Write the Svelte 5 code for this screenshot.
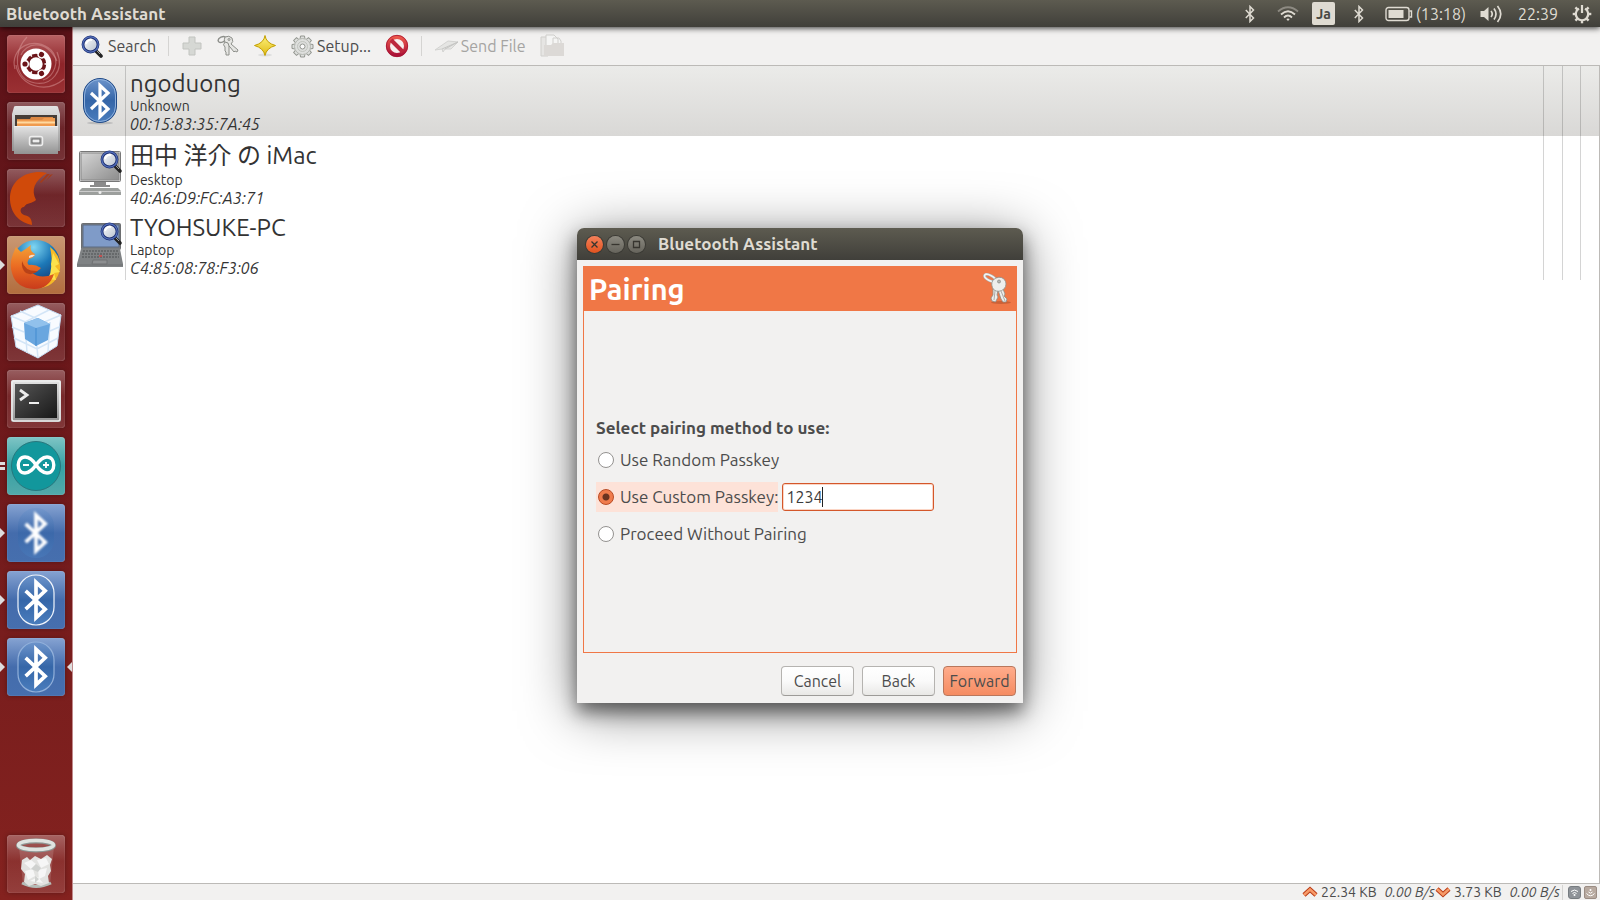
<script>
	let devices = [
		{ name: "ngoduong", type: "Unknown", address: "00:15:83:35:7A:45", icon: "bluetooth" },
		{ name: "田中 洋介 の iMac", type: "Desktop", address: "40:A6:D9:FC:A3:71", icon: "desktop" },
		{ name: "TYOHSUKE-PC", type: "Laptop", address: "C4:85:08:78:F3:06", icon: "laptop" }
	];
	let apps = [
		{ id: "dash", label: "Search your computer" },
		{ id: "files", label: "Files" },
		{ id: "swift", label: "Media" },
		{ id: "firefox", label: "Firefox", run: 1 },
		{ id: "cube", label: "Virtual machines" },
		{ id: "terminal", label: "Terminal" },
		{ id: "arduino", label: "Arduino", run: 2 },
		{ id: "bt1", label: "Bluetooth", run: 1 },
		{ id: "bt2", label: "Bluetooth Devices", run: 1 },
		{ id: "bt3", label: "Bluetooth Assistant", run: 1, active: true }
	];
	let selected = $state(0);
	let method = $state("custom");
	let passkey = $state("1234");
</script>

{#snippet rune()}
	<path d="M-9 -8 L8 8 L0 15.5 V-15.5 L8 -8 L-9 8" fill="none" stroke="#fff" stroke-width="3.2" />
{/snippet}

{#snippet lens()}
	<path d="M15 16 L20 21" stroke="#222" stroke-width="3.600" stroke-linecap="round" />
	<path d="M15 15 L19 19" stroke="#999" stroke-width="1" />
	<circle cx="9.500" cy="9.500" r="7.500" fill="url(#glass)" stroke="#1d2f72" stroke-width="2.800" />
	<circle cx="9.500" cy="9.500" r="7.700" fill="none" stroke="#5672bd" stroke-width="1.200" />
	<path d="M5 9 A5 5 0 0 1 11 5" fill="none" stroke="#fff" stroke-width="2" />
{/snippet}

{#snippet smallBluetooth()}
	<svg class="rune" width="10" height="18" viewBox="0 0 10 18" aria-hidden="true">
		<path d="M0.800 5 L8.500 13 L5 16.500 V1.500 L8.500 5 L0.800 13" fill="none" stroke="#dfdbd2" stroke-width="1.500" />
	</svg>
{/snippet}

<svg class="defs" width="0" height="0" aria-hidden="true">
	<defs>
		<linearGradient id="blue" x2="0" y2="1"><stop offset="0" stop-color="#6d94cb" /><stop offset=".5" stop-color="#3566a8" /><stop offset="1" stop-color="#4a7dbd" /></linearGradient>
		<linearGradient id="glass" x2="1" y2="1"><stop offset="0" stop-color="#fff" /><stop offset="1" stop-color="#b4bdcc" /></linearGradient>
		<linearGradient id="metal" x2="0" y2="1"><stop offset="0" stop-color="#e4e4e4" /><stop offset="1" stop-color="#929292" /></linearGradient>
		<linearGradient id="screen" x2="1" y2="1"><stop offset="0" stop-color="#d5d5d5" /><stop offset="1" stop-color="#8d8d8d" /></linearGradient>
		<linearGradient id="dark" x2="1" y2="1"><stop offset="0" stop-color="#555" /><stop offset="1" stop-color="#181818" /></linearGradient>
		<linearGradient id="star" x2="0" y2="1"><stop offset="0" stop-color="#fff37a" /><stop offset="1" stop-color="#dfba17" /></linearGradient>
		<linearGradient id="red" x2="0" y2="1"><stop offset="0" stop-color="#ed594c" /><stop offset="1" stop-color="#ab1238" /></linearGradient>
		<linearGradient id="fox" x2="0" y2="1"><stop offset="0" stop-color="#f4a137" /><stop offset=".5" stop-color="#ea6a22" /><stop offset="1" stop-color="#c93b1b" /></linearGradient>
		<radialGradient id="globe" cx=".45" cy=".15" r=".8"><stop offset="0" stop-color="#7fd6f2" /><stop offset=".5" stop-color="#1d79b8" /><stop offset="1" stop-color="#123a75" /></radialGradient>
	</defs>
</svg>

<div class="desktop">
	<header class="panel">
		<h1>Bluetooth Assistant</h1>
		<div class="tray">
			{@render smallBluetooth()}
			<svg class="wifi" width="22" height="16" viewBox="0 0 22 16" fill="none" stroke="#dfdbd2" stroke-width="1.800">
				<path d="M1 5.500 Q11 -3 21 5.500" stroke="#8d8a82" />
				<path d="M4 8.500 Q11 2 18 8.500" />
				<path d="M7 11.500 Q11 7.500 15 11.500" />
				<path d="M9.300 13 L11 15 L12.700 13 Q11 11.800 9.300 13Z" fill="#dfdbd2" stroke="none" />
			</svg>
			<span class="lang">Ja</span>
			{@render smallBluetooth()}
			<span class="battery">
				<svg width="28" height="16" viewBox="0 0 28 16" fill="none" stroke="#dfdbd2" stroke-width="1.400">
					<rect x="1" y="1.500" width="23" height="13" rx="2.500" />
					<path d="M24.500 5 H26.500 V11 H24.500" />
					<rect x="3.500" y="4" width="15" height="8" fill="#dfdbd2" stroke="none" />
				</svg>
				(13:18)
			</span>
			<svg class="sound" width="23" height="20" viewBox="0 0 23 20" fill="none" stroke="#dfdbd2" stroke-width="1.700">
				<path d="M0.500 7 H4 L8.500 3 V17 L4 13 H0.500Z" fill="#dfdbd2" stroke="none" />
				<path d="M11 7 Q13.500 10 11 13 M14 4.500 Q18 10 14 15.500 M17.500 2 Q24 10 17.500 18" />
			</svg>
			<time>22:39</time>
			<svg width="20" height="20" viewBox="-10 -10 20 20" fill="none" stroke="#dfdbd2">
				<path d="M-3 -5.400 A6.200 6.200 0 1 0 3 -5.400" stroke-width="2.200" />
				<path d="M0 -9 V-1" stroke-width="2.200" />
				{#each [45, 90, 135, 180, 225, 270, 315] as angle}
					<path d="M0 -6.500 V-9.300" stroke-width="2.400" transform="rotate({angle})" />
				{/each}
			</svg>
		</div>
	</header>

	<div class="body">
		<nav class="launcher">
			{#each apps as app}
				<button class="tile {app.id}" class:active={app.active} class:run={app.run === 1} aria-label={app.label}>
					<svg width="58" height="58" viewBox="0 0 58 58">
						{#if app.id === "dash"}
							<g fill="none" stroke="#d99a9a" stroke-opacity=".5" stroke-width="1.200">
								<path d="M8 34 C2 12 28 0 44 15 C54 25 47 42 36 45" />
								<path d="M20 2 C6 16 6 44 28 48 C44 51 58 36 50 17" />
								<path d="M9 30 C12 50 38 60 57 44 M14 20 C18 9 38 2 50 26" />
							</g>
							<circle cx="29" cy="29" r="15.500" fill="#fff" />
							<circle cx="29" cy="29" r="8.500" fill="none" stroke="#6b1419" stroke-width="3.600" />
							{#each [60, 180, 300] as angle}
								<g transform="rotate({angle} 29 29)">
									<circle cx="40" cy="29" r="4" fill="#fff" />
									<circle cx="40" cy="29" r="2.600" fill="#6b1419" />
									<path d="M20.500 29 H16" stroke="#fff" stroke-width="1.500" />
								</g>
							{/each}
						{:else if app.id === "files"}
							<path d="M7 5 Q7 4 9 4 H49 Q51 4 51 5 L53 12 V49 H5 V12Z" fill="url(#metal)" />
							<path d="M8 13 H50 V26 H8Z" fill="#463d37" />
							<path d="M10 17 H23 L24 15 H46 V26 H10Z" fill="#dc8742" />
							<path d="M10 18 H35 L37 16 H48 V26 H10Z" fill="#f09b4f" />
							<path d="M10 20.500 H48" stroke="#ffd9a0" stroke-width="2" />
							<path d="M7 24 H51 V52 H7Z" fill="url(#metal)" />
							<path d="M7 24.500 H51" stroke="#eee" />
							<rect x="22.500" y="34.500" width="13" height="9" rx="2" fill="#aaa" stroke="#eee" stroke-width="1.500" />
							<rect x="25" y="37" width="8" height="4" fill="#eee" stroke="#666" />
						{:else if app.id === "swift"}
							<path d="M40 4 C25 0 2 8 3 31 C4 47 15 54 25 56 C25 49 22 47 17 46 C12 44 13 38 17 38 C20 33 25 35 29 31 C24 21 27 12 40 4Z" fill="#d04a0a" />
							<path d="M34 14 L43 5 L40 5 L33 13Z M39 12 L46 5 L43 6Z" fill="#a43b18" />
						{:else if app.id === "firefox"}
							<circle cx="29" cy="28" r="24" fill="url(#globe)" />
							<path d="M43 11 Q54 19 53 33 Q50 49 34 52 Q47 42 45 31 Q45 20 43 11Z" fill="#f6ba27" />
							<path d="M46 17 L52 28 L48 30 L53 36 L47 37 L49 44 L41 43 Q45 35 44 28Z" fill="#fce24c" />
							<path d="M6 18 L9 11 L14 16 Q19 13 24 9 Q22 15 28 18 Q27 22 22 23 Q19 27 22 29 Q28 28 34 32 Q30 37 24 36 Q33 44 47 38 Q42 53 27 53 Q9 52 5 37 Q2 28 6 18Z" fill="url(#fox)" />
							<path d="M15 25 Q18 36 31 35 Q25 40 19 37 Q14 33 15 25Z" fill="#b84218" />
							<path d="M22 20 Q25 18 28 19 Q25 22 22 22Z" fill="#f4ded0" />
						{:else if app.id === "cube"}
							<path d="M31 2 L54 12 L50 43 L31 55 L9 44 L4 13Z" fill="#f8fbff" stroke="#c4dcf4" />
							<path d="M4 13 L28 23 L54 12 M28 23 L31 55 M13 8 L37 19 M42 7 L18 19 L20 50 M5 24 L17 29 M43 28 L52 24 M7 35 L30 46 L51 35 M43 19 L41 48" fill="none" stroke="#d3e5f7" stroke-width="1.500" />
							<path d="M17 20 L31 15 L43 21 L41 37 L29 43 L18 36Z" fill="#69a6df" />
							<path d="M17 20 L29 25 L43 21 L31 15Z" fill="#91c1ec" />
							<path d="M29 25 V43" stroke="#438bd0" />
						{:else if app.id === "terminal"}
							<rect x="4" y="10" width="50" height="42" rx="2" fill="url(#metal)" />
							<rect x="5" y="11" width="48" height="40" rx="2" fill="none" stroke="#eee" stroke-width="1.500" />
							<rect x="8" y="14" width="42" height="34" fill="url(#dark)" />
							<path d="M13 20 L20 25 L13 30" fill="none" stroke="#eee" stroke-width="2.800" />
							<path d="M22 33 H32" stroke="#eee" stroke-width="2" />
						{:else if app.id === "arduino"}
							<circle cx="29" cy="29" r="24.500" fill="#12979c" stroke="#28777d" />
							<path d="M29 28 C24 20 20 20 18 20 C9 20 9 36 18 36 C23 36 26 32 29 28 C32 24 35 20 40 20 C49 20 49 36 40 36 C35 36 32 32 29 28Z" fill="none" stroke="#fff" stroke-width="3.400" />
							<path d="M16 28 H22 M36 28 H42 M39 25 V31" stroke="#fff" stroke-width="1.800" />
						{:else}
							<rect x="11" y="4" width="36" height="50" rx="18" fill="url(#blue)" stroke={app.id === "bt2" ? "#f0f5fc" : "#91b0da"} stroke-width={app.id === "bt1" ? 0 : 1.2} opacity={app.id === "bt1" ? 0.55 : 1} />
							<g class="mark" transform="translate(29 29) scale(1.15)">
								{@render rune()}
							</g>
						{/if}
					</svg>
					{#if app.run === 2}<i class="pair"></i>{/if}
				</button>
			{/each}
			<button class="tile trash" aria-label="Trash">
				<svg width="58" height="58" viewBox="0 0 58 58">
					<path d="M12 12 L16 49 Q29 54 43 49 L47 12Z" fill="#fff" fill-opacity=".14" />
					<path d="M15 48 Q29 55 44 48" stroke="#b5bcb8" stroke-width="3" fill="none" />
					<path d="M15 25 L20 22 L23 25 L28 21 L34 24 L40 20 L45 24 L43 30 L44 36 L41 41 L42 48 L34 51 L28 49 L22 51 L17 47 L18 39 L14 34Z" fill="#e2e2e0" />
					<path d="M17 28 L24 25 L29 29 L24 34Z M30 25 L39 23 L42 29 L34 33Z M18 36 L26 34 L28 41 L21 45Z M31 35 L40 33 L38 41 L32 44Z M23 46 L31 42 L36 48Z" fill="#f6f6f6" />
					<path d="M24 34 L29 29 L34 33 L31 37Z M28 41 L32 44 L28 48Z" fill="#cfd1cf" />
					<ellipse cx="29" cy="10.500" rx="17.500" ry="4.500" fill="none" stroke="#8d9592" stroke-width="5" />
					<ellipse cx="29" cy="10" rx="17.500" ry="4.500" fill="none" stroke="#dfe3e0" stroke-width="3.600" />
				</svg>
			</button>
		</nav>

		<main class="window">
			<div class="toolbar">
				<button>
					<svg width="23" height="23" viewBox="0 0 23 23">{@render lens()}</svg>
					Search
				</button>
				<span class="sep"></span>
				<button disabled aria-label="Add">
					<svg width="22" height="22" viewBox="0 0 22 22"><path d="M8 2 H14 V8 H20 V14 H14 V20 H8 V14 H2 V8 H8Z" fill="#d6d8d4" stroke="#c2c4c0" /></svg>
				</button>
				<button aria-label="Pair">
					<svg width="22" height="22" viewBox="0 0 22 22" fill="#e5e5e2" stroke="#8d8f8a">
						<ellipse cx="5" cy="4.500" rx="4" ry="2.500" fill="none" stroke-width="1.400" transform="rotate(-25 5 4.500)" />
						<path d="M8 2 Q12 0 15 3 Q17 7 14 9 L21 15 L20 17 L18 16 L17 17 L13 12 L10 9 Q6 7 8 2Z" />
						<path d="M8 7 Q12 7 12 11 L12 20 L9 20 V17 L8 16 V12 Q5 10 8 7Z" />
						<circle cx="12" cy="4.500" r="1" />
					</svg>
				</button>
				<button aria-label="Trust">
					<svg width="24" height="24" viewBox="0 0 24 24"><ellipse cx="12" cy="21" rx="7" ry="1.500" fill="#ddd" /><path d="M12 1.500 Q13 9 22.500 11.500 Q13.500 14 12 21.500 Q10.500 14 1.500 11.500 Q11 9 12 1.500Z" fill="url(#star)" stroke="#c4a000" /></svg>
				</button>
				<button class="setup">
					<svg width="23" height="23" viewBox="-11.500 -11.500 23 23">
						{#each [0, 45, 90, 135, 180, 225, 270, 315] as angle}
							<path d="M-2.500 -7 L-2 -10.500 H2 L2.500 -7" fill="#dedfdd" stroke="#92958f" transform="rotate({angle})" />
						{/each}
						<circle r="8" fill="#dedfdd" stroke="#b5b8b2" />
						<circle r="5" fill="none" stroke="#c0c3bd" />
						<circle r="2.500" fill="#fafafa" stroke="#92958f" />
					</svg>
					Setup...
				</button>
				<button aria-label="Block">
					<svg width="24" height="24" viewBox="0 0 24 24">
						<circle cx="12" cy="12" r="9" fill="#f7eeee" stroke="url(#red)" stroke-width="4" />
						<path d="M6 6 L18 18" stroke="#bd263d" stroke-width="4" />
						<circle cx="12" cy="12" r="10.700" fill="none" stroke="#a61331" stroke-width=".8" />
					</svg>
				</button>
				<span class="sep"></span>
				<button class="send" disabled>
					<svg width="25" height="14" viewBox="0 0 25 14"><path d="M1 11 L14 2 L24 3 L17 10 L11 10 L9 13 L8 10Z" fill="#e5e5e3" stroke="#d3d3d1" /><path d="M8 10 L24 3 L11 10" fill="none" stroke="#c6c6c4" /></svg>
					Send File
				</button>
				<button disabled aria-label="Browse Device">
					<svg width="25" height="24" viewBox="0 0 25 24"><path d="M1 3 H8 V22 H1Z" fill="#e6e5e3" stroke="#d0cfcc" /><path d="M6 1 H14 L18 5 V20 H6Z M13 4 H19 L21 7 V18 H13Z" fill="#f5f5f4" stroke="#d0cfcc" /><path d="M4 11 H11 L13 9 H24 V22 H4Z" fill="#dcd9d6" /></svg>
				</button>
			</div>

			<div class="list">
				<table aria-label="Devices">
					<tbody>
						{#each devices as device, i}
							<tr class:selected={selected === i} onclick={() => (selected = i)}>
								<td class="icon">
									<svg width="48" height="48" viewBox="0 0 48 48">
										{#if device.icon === "bluetooth"}
											<ellipse cx="24" cy="46" rx="13" ry="1.500" fill="#bbb" />
											<rect x="7.500" y="1.500" width="33" height="44" rx="16.500" fill="url(#blue)" stroke="#204a87" />
											<rect x="8.500" y="2.500" width="31" height="42" rx="15.500" fill="none" stroke="#8eb0dc" />
											<g transform="translate(24 24)">{@render rune()}</g>
										{:else if device.icon === "desktop"}
											<path d="M18 32 H30 V36 H34 V38 H14 V36 H18Z" fill="#8b8b8b" />
											<rect x="3.500" y="2.500" width="41" height="30" rx="1" fill="#ddd" stroke="#777" />
											<rect x="5" y="4" width="38" height="27" fill="url(#screen)" stroke="#888" />
											<path d="M6 39 H42 L45 42 V46 H3 V42Z" fill="#9c9f9d" />
											<path d="M3 42.500 H45" stroke="#ccc" />
											<circle cx="24" cy="43.500" r="1.500" fill="#eee" />
											<g transform="translate(24 1)">{@render lens()}</g>
										{:else}
											<rect x="5.500" y="2.500" width="39" height="26" rx="1" fill="#7b7e80" stroke="#6c6e70" />
											<rect x="7" y="4" width="36" height="22" fill="#7f9bc8" stroke="#5c6b82" />
											<path d="M5 28 H44 L47 43 V46 H1 V43Z" fill="#7f8284" />
											<path d="M7 30 H42 M6 33 H43 M6 36 H43" stroke="#66696b" stroke-width="2" stroke-dasharray="2 1" />
											<path d="M17 39 H31 V43 H16Z M1 44 H47" fill="#8c8e90" stroke="#6e7072" />
											<path d="M23 35 H26" stroke="#d44" stroke-width="1.500" />
											<g transform="translate(24 1)">{@render lens()}</g>
										{/if}
									</svg>
								</td>
								<td class="info">
									<div class="name" class:cjk={i === 1}>{device.name}</div>
									<div class="type">{device.type}</div>
									<div class="address">{device.address}</div>
								</td>
								<td class="signal"></td>
								<td class="signal link"></td>
								<td class="signal"></td>
							</tr>
						{/each}
					</tbody>
				</table>
			</div>

			<footer class="status">
				<svg width="16" height="12" viewBox="0 0 16 12"><path d="M2 9 L8 3.500 L14 9" fill="none" stroke="#b93a15" stroke-width="4.500" /><path d="M2 9 L8 3.500 L14 9" fill="none" stroke="#f79a68" stroke-width="2.500" /></svg>
				<span class="size">22.34 KB</span>
				<em>0.00 B/s</em>
				<svg width="16" height="12" viewBox="0 0 16 12"><path d="M2 3 L8 8.500 L14 3" fill="none" stroke="#b93a15" stroke-width="4.500" /><path d="M2 3 L8 8.500 L14 3" fill="none" stroke="#f79a68" stroke-width="2.500" /></svg>
				<span class="size">3.73 KB</span>
				<em>0.00 B/s</em>
				<span class="line"></span>
				<svg class="act" width="13" height="13" viewBox="0 0 13 13"><rect x=".5" y=".5" width="12" height="12" rx="2.500" fill="#8f9398" stroke="#777c80" /><path d="M3 5.500 Q6.500 2.500 10 5.500 M4.500 7.500 Q6.500 5.500 8.500 7.500" fill="none" stroke="#fff" /><circle cx="6.500" cy="9" r="1" fill="#fff" /></svg>
				<svg class="act" width="13" height="13" viewBox="0 0 13 13"><rect x=".5" y=".5" width="12" height="12" rx="1.500" fill="#b8aaa0" stroke="#9b8d84" /><path d="M2.500 7.500 Q6.500 12 10.500 7.500 M4.500 6 Q6.500 8.500 8.500 6" fill="none" stroke="#fff" /><circle cx="6.500" cy="4" r="1" fill="#fff" /></svg>
			</footer>
		</main>
	</div>

	<div class="overlay">
		<form class="dialog" aria-labelledby="dialog-title" onsubmit={(e) => e.preventDefault()}>
			<div class="titlebar">
				<button type="button" class="ball close" aria-label="Close"><svg width="17" height="17" viewBox="0 0 17 17"><path d="M5.500 5.500 L11.500 11.500 M11.500 5.500 L5.500 11.500" /></svg></button>
				<button type="button" class="ball" aria-label="Minimize"><svg width="17" height="17" viewBox="0 0 17 17"><path d="M4.500 8.500 H12.500" /></svg></button>
				<button type="button" class="ball" aria-label="Maximize"><svg width="17" height="17" viewBox="0 0 17 17"><path d="M5.500 5.500 H11.500 V11.500 H5.500Z" /></svg></button>
				<h2 id="dialog-title">Bluetooth Assistant</h2>
			</div>
			<div class="page">
				<div class="heading">
					<h3>Pairing</h3>
					<svg width="32" height="32" viewBox="0 0 32 32">
						<ellipse cx="20" cy="29.500" rx="10" ry="1.500" fill="#a84b27" opacity=".5" />
						<ellipse cx="9" cy="5" rx="6" ry="2.600" transform="rotate(28 9 5)" fill="none" stroke="#aaa" stroke-width="2.800" />
						<ellipse cx="9" cy="5" rx="6" ry="2.600" transform="rotate(28 9 5)" fill="none" stroke="#f4f4f2" stroke-width="1.600" />
						<g fill="#eeeeec" stroke="#8d8f8a" stroke-width=".8">
							<path d="M12 15 L17 17 L16 22 L17 24 L14.500 29 L11 28 L10 25 L12 22Z" />
							<path d="M17 17 L22 16 L24 21 L23 23 L26 26 L25 29 L22 29 L20 26Z" />
							<path d="M12 7 Q18 2 23 6 Q27 11 23 16 Q18 20 13 17 Q9 12 12 7Z" />
							<circle cx="18" cy="8.500" r="1.500" fill="#b8b8b4" />
						</g>
						<path d="M14 18 L13 27 M20 18 L24 28" stroke="#aaa" />
					</svg>
				</div>
				<div class="choices">
					<strong>Select pairing method to use:</strong>
					<div class="row"><label><input type="radio" name="method" value="random" bind:group={method} />Use Random Passkey</label></div>
					<div class="row">
						<label class:hot={method === "custom"}><input type="radio" name="method" value="custom" bind:group={method} />Use Custom Passkey:</label>
						<span class="entry">
							<input type="text" aria-label="Custom passkey" bind:value={passkey} />
							<i class="caret"></i>
						</span>
					</div>
					<div class="row"><label><input type="radio" name="method" value="none" bind:group={method} />Proceed Without Pairing</label></div>
				</div>
			</div>
			<div class="actions">
				<button type="button">Cancel</button>
				<button type="button">Back</button>
				<button type="submit" class="forward">Forward</button>
			</div>
		</form>
	</div>
</div>

<style>
	:global(body) {
		margin: 0;
	}
	.desktop {
		position: relative;
		display: flex;
		flex-direction: column;
		height: 100vh;
		overflow: hidden;
		font-family: Ubuntu, "Noto Sans", "Noto Sans CJK JP", sans-serif;
		font-size: 16px;
		color: #4c4c4c;
		background: #fff;
	}
	.defs {
		position: absolute;
	}
	button {
		font: inherit;
		color: inherit;
		padding: 0;
		border: 0;
		background: none;
	}
	svg {
		flex: none;
		display: block;
	}
	h1,
	h2,
	h3 {
		margin: 0;
	}

	.panel {
		display: flex;
		justify-content: space-between;
		align-items: center;
		height: 27px;
		padding: 0 8px 0 6px;
		color: #dfdbd2;
		background: linear-gradient(#5d5b50, #403f3a);
		box-shadow: 0 1px 6px rgba(0, 0, 0, 0.8);
		z-index: 2;
	}
	.panel h1,
	.titlebar h2 {
		font-size: 17px;
		line-height: 26px;
	}
	.tray {
		display: flex;
		align-items: center;
		line-height: 26px;
	}
	.wifi {
		margin: 0 13px 0 22px;
	}
	.lang {
		width: 23px;
		height: 23px;
		margin-right: 19px;
		border-radius: 2px;
		background: #dfdbd2;
		color: #4a4943;
		font-size: 14px;
		font-weight: bold;
		line-height: 25px;
		text-align: center;
	}
	.battery {
		display: flex;
		align-items: center;
		gap: 3px;
		margin: 0 14px 0 21px;
	}
	.tray time {
		margin: 0 14px 0 15px;
	}

	.body {
		display: flex;
		flex: 1;
		min-height: 0;
	}
	.launcher {
		display: flex;
		flex-direction: column;
		gap: 9px;
		width: 65px;
		padding: 8px 0 7px 7px;
		border-right: 1px solid #c08a8c;
		background: linear-gradient(#5c1218, #84221f);
	}
	.tile {
		position: relative;
		width: 58px;
		height: 58px;
		border-radius: 4px;
		background: linear-gradient(rgba(255, 255, 255, 0.3), rgba(255, 255, 255, 0.07) 45%, rgba(255, 255, 255, 0.13));
		box-shadow: inset 0 0 1px rgba(255, 255, 255, 0.6), 0 0 5px rgba(0, 0, 0, 0.3);
	}
	.dash {
		background: linear-gradient(#b96264, #8e2429 50%, #9a3033);
	}
	.firefox {
		background: linear-gradient(#c99873, #b26d3e);
	}
	.arduino {
		background: linear-gradient(#7fc5c5, #35a0a3 50%, #53a9aa);
	}
	.bt1,
	.bt2,
	.bt3 {
		background: linear-gradient(#86a3d2, #446cac 50%, #466fae);
	}
	.bt1 .mark {
		filter: blur(1px);
	}
	.run::before,
	.active::after {
		content: "";
		position: absolute;
		top: 24px;
		left: -7px;
		border: 5px solid transparent;
		border-left-color: #ddd;
		border-right-width: 0;
	}
	.active::after {
		left: 60px;
		border-left-width: 0;
		border-right: 5px solid #ddd;
	}
	.pair {
		position: absolute;
		left: -7px;
		top: 25px;
		width: 5px;
		height: 2px;
		border-top: 3px solid #ddd;
		border-bottom: 3px solid #ddd;
	}
	.trash {
		margin-top: auto;
	}

	.window {
		display: flex;
		flex-direction: column;
		flex: 1;
		min-width: 0;
		background: #f2f1f0;
	}
	.toolbar {
		display: flex;
		align-items: center;
		height: 38px;
		padding-left: 8px;
		gap: 14px;
	}
	.toolbar button {
		display: flex;
		align-items: center;
		gap: 4px;
	}
	.toolbar .setup {
		gap: 3px;
	}
	.toolbar .send {
		color: #a5a4a2;
		gap: 2px;
	}
	.toolbar .sep {
		width: 1px;
		height: 20px;
		background: #d5d4d2;
		margin: 0 -2px;
	}
	.list {
		flex: 1;
		min-height: 0;
		border: 1px solid #bcbab7;
		border-left-width: 0;
		background: #fff;
	}
	table {
		width: 100%;
		border-spacing: 0;
		table-layout: fixed;
	}
	tr.selected {
		background: linear-gradient(#ebebe9, #d9d8d6);
	}
	td {
		padding: 0;
		vertical-align: middle;
		border-left: 1px solid rgba(0, 0, 0, 0.17);
	}
	td.icon {
		width: 52px;
		border: 0;
	}
	td.icon svg {
		margin-left: 3px;
	}
	td.info {
		padding: 3px 4px 1px;
		color: #333;
	}
	td.signal {
		width: 18px;
	}
	td.link {
		width: 17px;
	}
	.name {
		font-size: 24px;
		line-height: 30px;
	}
	.name.cjk {
		line-height: 34px;
	}
	.type {
		font-size: 14px;
		line-height: 14px;
	}
	.address {
		line-height: 22px;
		font-style: italic;
	}
	.status {
		display: flex;
		align-items: center;
		justify-content: flex-end;
		height: 16px;
		padding-right: 3px;
		font-size: 14px;
		line-height: 16px;
	}
	.status .size {
		margin: 0 8px 0 3px;
	}
	.status .line {
		width: 1px;
		height: 15px;
		margin: 0 2px;
		background: #d5d4d2;
	}
	.status .act {
		margin-left: 3px;
	}

	.overlay {
		position: absolute;
		inset: 31px 0 0;
		display: flex;
		align-items: center;
		justify-content: center;
	}
	.dialog {
		display: flex;
		flex-direction: column;
		width: 446px;
		height: 475px;
		border-radius: 7px 7px 0 0;
		background: #f2f1f0;
		box-shadow: 0 9px 18px rgba(0, 0, 0, 0.5), 0 8px 54px rgba(0, 0, 0, 0.5);
	}
	.titlebar {
		display: flex;
		align-items: center;
		gap: 4px;
		height: 32px;
		padding-left: 9px;
		border-radius: 7px 7px 0 0;
		color: #dfdbd2;
		background: linear-gradient(#5d5b50, #403f3a);
	}
	.titlebar h2 {
		margin-left: 9px;
		line-height: 28px;
	}
	.ball {
		border-radius: 50%;
		background: linear-gradient(#8b8980, #66645c);
		box-shadow: 0 0 0 1px #3b3a35;
	}
	.ball.close {
		background: linear-gradient(#f4805a, #e2531f);
	}
	.ball svg path {
		fill: none;
		stroke: #37352f;
		stroke-width: 1.3;
	}
	.page {
		flex: 1;
		display: flex;
		flex-direction: column;
		margin: 6px 6px 0;
		border: 1px solid #f07746;
	}
	.heading {
		display: flex;
		align-items: center;
		justify-content: space-between;
		height: 44px;
		padding-left: 5px;
		padding-right: 3px;
		color: #fff;
		background: #f07746;
	}
	.heading h3 {
		font-size: 29px;
		line-height: 42px;
	}
	.choices {
		flex: 1;
		display: flex;
		flex-direction: column;
		justify-content: center;
		gap: 7px;
		padding: 3px 0 0 12px;
		font-size: 17px;
	}
	.choices strong {
		line-height: 20px;
	}
	.row {
		display: flex;
		align-items: center;
		gap: 4px;
	}
	.row label {
		display: flex;
		align-items: center;
		gap: 6px;
		height: 30px;
		padding-left: 2px;
	}
	.hot {
		background: #fde2d8;
	}
	input[type="radio"] {
		appearance: none;
		width: 16px;
		height: 16px;
		margin: 0;
		border: 1px solid #949290;
		border-radius: 50%;
		background: #fff;
	}
	input[type="radio"]:checked {
		border-color: #b94a23;
		background: radial-gradient(#6b3320 3px, #f07b4c 4px);
	}
	.entry {
		position: relative;
	}
	input[type="text"] {
		display: block;
		box-sizing: border-box;
		width: 152px;
		height: 28px;
		padding: 0 3px;
		border: 1px solid #d4572a;
		border-radius: 3px;
		outline: 0;
		background: #fff;
		box-shadow: inset 0 0 0 1px #fbd5c5;
		color: #3c3c3c;
		font: inherit;
		font-size: 16px;
		caret-color: transparent;
	}
	.caret {
		position: absolute;
		top: 4px;
		left: 40px;
		width: 1px;
		height: 20px;
		background: #222;
	}
	.actions {
		display: flex;
		justify-content: flex-end;
		gap: 8px;
		padding: 13px 7px 7px;
	}
	.actions button {
		width: 73px;
		height: 30px;
		border: 1px solid #b5b3b0;
		border-bottom-color: #9d9b98;
		border-radius: 4px;
		background: linear-gradient(#fff, #fafafa 50%, #e9e8e6);
	}
	.actions .forward {
		border-color: #b9775c;
		background: linear-gradient(#ffac8c, #f58c62);
	}
</style>
